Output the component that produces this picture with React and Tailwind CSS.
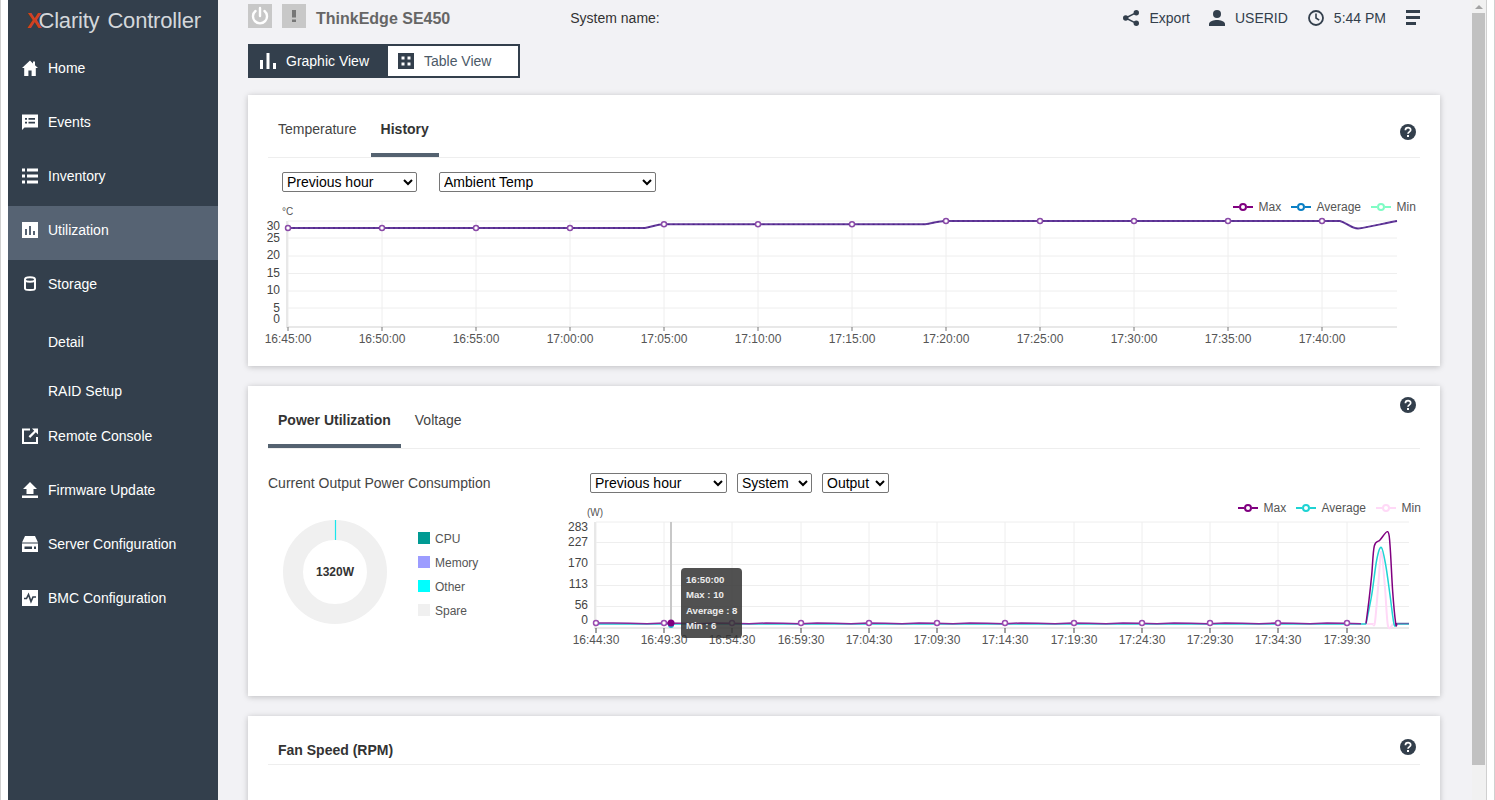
import React from "react";

const F = "Liberation Sans, Arial, sans-serif";

const NAV = [
  { label: "Home", icon: "home" },
  { label: "Events", icon: "events" },
  { label: "Inventory", icon: "inventory" },
  { label: "Utilization", icon: "utilization", active: true },
  { label: "Storage", icon: "storage" },
  { label: "Detail", sub: true },
  { label: "RAID Setup", sub: true },
  { label: "Remote Console", icon: "remote" },
  { label: "Firmware Update", icon: "firmware" },
  { label: "Server Configuration", icon: "server" },
  { label: "BMC Configuration", icon: "bmc" },
];

function NavIcon({ name }) {
  const p = { width: 16, height: 16, viewBox: "0 0 16 16", fill: "white", className: "shrink-0" };
  if (name === "home")
    return (
      <svg {...p}>
        <path d="M8 .5 0 8h2.200v8h4.200v-5.500h3.200V16h4.200V8H16L13 5.200V1.500h-2v1.900z" />
      </svg>
    );
  if (name === "events")
    return (
      <svg {...p}>
        <path fillRule="evenodd" d="M0 .5h16v13H2.500L0 16zM3 4v1.800h2V4zm3.500 0v1.800H13V4zM3 7.800v1.800h2V7.800zm3.500 0v1.800H13V7.800z" />
      </svg>
    );
  if (name === "inventory")
    return (
      <svg {...p}>
        <path d="M0 .5h3v3H0zM5 .5h11v3H5zM0 6.500h3v3H0zM5 6.500h11v3H5zM0 12.500h3v3H0zM5 12.500h11v3H5z" />
      </svg>
    );
  if (name === "utilization")
    return (
      <svg {...p}>
        <path fillRule="evenodd" d="M0 0h16v16H0zM3 7v6h2V7zm4-3v9h2V4zm4 5v4h2V9z" />
      </svg>
    );
  if (name === "storage")
    return (
      <svg {...p} fill="none" stroke="white" strokeWidth="2">
        <path d="M3 3.500v9c0 2 10 2 10 0v-9" />
        <ellipse cx="8" cy="3.500" rx="5" ry="2.200" />
      </svg>
    );
  if (name === "remote")
    return (
      <svg {...p}>
        <path d="M0 .5h8v2H2v11.500h12V9h2v7H0z" />
        <path d="M10 .5h6v6l-2.200-2.200-5.600 5.600-1.600-1.600 5.600-5.600z" />
      </svg>
    );
  if (name === "firmware")
    return (
      <svg {...p}>
        <path d="M8 0l7 7h-3.500v5h-7V7H1zM0 13.500h16V16H0z" />
      </svg>
    );
  if (name === "server")
    return (
      <svg {...p}>
        <path d="M3 0h10l3 6.500H0z" />
        <path fillRule="evenodd" d="M0 7.500h16V16H0zM2.500 10.500v2.500H10v-2.500zm9.500 0v2.500h2v-2.500z" />
      </svg>
    );
  return (
    <svg {...p}>
      <path d="M0 0h16v16H0z" />
      <path d="M2 8.500h2.500l2-4 2.500 7 2-4.500h3" fill="none" stroke="#333f4c" strokeWidth="1.600" />
    </svg>
  );
}

function Sidebar() {
  return (
    <div className="w-[210px] shrink-0 bg-[#333f4c] text-white">
      <div className="h-[44px] pl-[19px] pt-[8px] text-[22px] leading-[26px] text-[#d3d7db] whitespace-nowrap tracking-[-0.2px]">
        <span className="font-bold text-[#d2411f]">X</span>
        <span className="-ml-[3px]">Clarity</span>
        <span className="ml-[8px]">Controller</span>
      </div>
      {NAV.map((n) =>
        n.sub ? (
          <div key={n.label} className="h-[49px] pl-[40px] pt-[18px] text-sm leading-5">
            {n.label}
          </div>
        ) : (
          <div
            key={n.label}
            className={
              n.active
                ? "h-[54px] flex items-start gap-[10px] pl-[14px] pt-[14px] text-sm leading-5 bg-[#566373]"
                : "h-[54px] flex items-start gap-[10px] pl-[14px] pt-[14px] text-sm leading-5"
            }
          >
            <span className="mt-[2px]">
              <NavIcon name={n.icon} />
            </span>
            {n.label}
          </div>
        )
      )}
    </div>
  );
}

function HeaderBar() {
  return (
    <div className="flex items-start h-[44px] pt-[4px] pr-[20px] text-sm text-[#333f4c]">
      <div className="w-6 h-6 bg-[#c8c8c8] flex items-center justify-center">
        <svg width="20" height="20" viewBox="0 0 20 20" fill="none" stroke="white" strokeWidth="2.400" strokeLinecap="round">
          <path d="M10 2v8" />
          <path d="M5.500 5a7 7 0 1 0 9 0" />
        </svg>
      </div>
      <div className="ml-[10px] w-6 h-6 bg-[#c8c8c8] flex items-center justify-center">
        <svg width="6" height="14" viewBox="0 0 6 14" fill="#777">
          <path d="M1 1h4v7.500H1zM1 10.500h4V13H1z" />
        </svg>
      </div>
      <div className="ml-[10px] mt-[5px] text-base leading-5 font-bold text-[#666]">ThinkEdge SE450</div>
      <div className="ml-[120px] mt-[4px] leading-5 text-[#333]">System name:</div>
      <div className="ml-auto flex items-start">
        <svg className="mt-[6px]" width="16" height="16" viewBox="0 0 16 16" fill="#333f4c">
          <circle cx="13.300" cy="2.700" r="2.700" />
          <circle cx="2.700" cy="8" r="2.700" />
          <circle cx="13.300" cy="13.300" r="2.700" />
          <path d="M2.700 8l10.600-5.300M2.700 8l10.600 5.300" stroke="#333f4c" strokeWidth="1.400" />
        </svg>
        <span className="ml-[10px] mt-[4px] leading-5">Export</span>
        <svg className="ml-[19px] mt-[6px]" width="16" height="16" viewBox="0 0 16 16" fill="#333f4c">
          <circle cx="8" cy="4" r="4" />
          <path d="M0 16v-2c0-2.800 5-4 8-4s8 1.200 8 4v2z" />
        </svg>
        <span className="ml-[10px] mt-[4px] leading-5">USERID</span>
        <svg className="ml-[20px] mt-[6px]" width="16" height="16" viewBox="0 0 16 16" fill="none" stroke="#333f4c">
          <circle cx="8" cy="8" r="7" strokeWidth="1.800" />
          <path d="M8 3.500V8l3.200 2.200" strokeWidth="1.600" />
        </svg>
        <span className="ml-[10px] mt-[4px] leading-5">5:44 PM</span>
        <div className="ml-[20px] mt-[6px] w-[14px] flex flex-col gap-[3px]">
          <div className="h-[3px] bg-[#333f4c]" />
          <div className="h-[3px] bg-[#333f4c]" />
          <div className="h-[3px] w-[10px] bg-[#333f4c]" />
        </div>
      </div>
    </div>
  );
}

function ViewSwitch() {
  return (
    <div className="flex w-[272px] h-[34px] border-2 border-[#333f4c] text-sm bg-white">
      <div className="w-[138px] bg-[#333f4c] text-white flex items-center pl-[10px] gap-[10px]">
        <svg width="16" height="16" viewBox="0 0 16 16" fill="white">
          <path d="M0 7h3v9H0zM6.500 0h3v16h-3zM13 10h3v6h-3z" />
        </svg>
        Graphic View
      </div>
      <div className="flex-1 flex items-center pl-[10px] gap-[10px] text-[#4c5a68]">
        <svg width="16" height="16" viewBox="0 0 16 16" fill="#333f4c">
          <path fillRule="evenodd" d="M0 0h16v16H0zM3.500 3.500v3h3v-3zm6 0v3h3v-3zm-6 6v3h3v-3zm6 0v3h3v-3z" />
        </svg>
        Table View
      </div>
    </div>
  );
}

function Help({ className }) {
  return (
    <svg className={className} width="16" height="16" viewBox="0 0 16 16">
      <circle cx="8" cy="8" r="8" fill="#333f4c" />
      <path d="M5.400 6.200c0-3.300 5.300-3.300 5.300-.2 0 1.900-2.700 1.900-2.700 3.800" fill="none" stroke="white" strokeWidth="1.700" />
      <path d="M7 11h2v2H7z" fill="white" />
    </svg>
  );
}

function Tab({ active, children, className = "" }) {
  return (
    <div
      className={
        (active
          ? "h-[62px] px-[10px] pt-[24px] text-sm leading-5 font-bold text-[#333] border-b-4 border-[#546270] "
          : "h-[62px] px-[10px] pt-[24px] text-sm leading-5 text-[#444] ") + className
      }
    >
      {children}
    </div>
  );
}

function Sel({ className, options }) {
  return (
    <select className={"h-5 text-sm bg-white text-black border border-[#767676] rounded-[2px] " + className}>
      {options.map((o) => (
        <option key={o}>{o}</option>
      ))}
    </select>
  );
}

function LegendItem({ x, color, label }) {
  // x is the marker centre
  return (
    <g>
      <path d={`M${x - 10} 0h6M${x + 4} 0h6`} stroke={color} strokeWidth="2" />
      <circle cx={x} r="3" fill="white" stroke={color} strokeWidth="2" />
      <text x={x + 15.5} y="4" fontSize="12" fill="#555">
        {label}
      </text>
    </g>
  );
}

// catmull-rom through the points, for the curved parts of the lines
function smooth(pts) {
  let d = `M${pts[0][0]} ${pts[0][1]}`;
  for (let i = 0; i < pts.length - 1; i++) {
    const a = pts[i - 1] || pts[i];
    const b = pts[i];
    const c = pts[i + 1];
    const e = pts[i + 2] || c;
    const c1x = b[0] + (c[0] - a[0]) / 6;
    const c1y = b[1] + (c[1] - a[1]) / 6;
    const c2x = c[0] - (e[0] - b[0]) / 6;
    const c2y = c[1] - (e[1] - b[1]) / 6;
    d += `C${c1x} ${c1y} ${c2x} ${c2y} ${c[0]} ${c[1]}`;
  }
  return d;
}

// small wobble of the idle power reading
function idle(base, from, to) {
  const pts = [];
  for (let x = from, i = 0; x < to; x += 17, i++) {
    pts.push(`L${x} ${base + ((i * 7) % 3) * 0.35}`);
  }
  return pts.join("");
}

const T_X = [288, 382, 476, 570, 664, 758, 852, 946, 1040, 1134, 1228, 1322];
const T_LABELS = ["16:45:00", "16:50:00", "16:55:00", "17:00:00", "17:05:00", "17:10:00", "17:15:00", "17:20:00", "17:25:00", "17:30:00", "17:35:00", "17:40:00"];
const T_Y = [221, 238, 256, 273.5, 291, 308];
const T_TICKS = [[30, 230], [25, 242], [20, 259], [15, 277], [10, 294], [5, 312], [0, 323]];
const TEMP_LINE =
  "M288 228H645C652 227 656 224.300 664 224.300H925C932 223.500 938 221 946 221H1340C1347 223 1351 228.300 1358 228.500C1368 227.500 1385 223 1397 221";

function TempChart() {
  const yAt = (x) => (x < 664 ? 228 : x < 946 ? 224.3 : 221);
  return (
    <svg className="block mt-[6px] overflow-visible" width="1152" height="160" viewBox="268 198 1152 160" fontFamily={F}>
      <text x="282" y="215" fontSize="10" fill="#555">°C</text>
      {T_Y.map((y) => (
        <path key={y} d={`M288 ${y}H1397`} stroke="#eeeeee" />
      ))}
      {T_X.map((x) => (
        <path key={x} d={`M${x} 221V326`} stroke="#eeeeee" />
      ))}
      <path d="M287 221V327H1397" fill="none" stroke="#e8e8e8" strokeWidth="2" />
      {T_X.map((x, i) => (
        <g key={x}>
          <path d={`M${x} 327v4`} stroke="#777" />
          <text x={x} y="343" fontSize="12" fill="#555" textAnchor="middle">{T_LABELS[i]}</text>
        </g>
      ))}
      {T_TICKS.map(([v, y]) => (
        <text key={v} x="280" y={y} fontSize="12" fill="#444" textAnchor="end">{v}</text>
      ))}
      <path d={TEMP_LINE} fill="none" stroke="#663d9c" strokeWidth="2" />
      <path d={TEMP_LINE} fill="none" stroke="#4a1f86" strokeWidth="1" strokeDasharray="2 3" />
      {T_X.map((x) => (
        <circle key={x} cx={x} cy={yAt(x)} r="2.500" fill="white" stroke="#8a4aa8" strokeWidth="1.500" />
      ))}
      <g transform="translate(0 207)">
        <LegendItem x={1243} color="#800080" label="Max" />
        <LegendItem x={1301} color="#0a7fc4" label="Average" />
        <LegendItem x={1381} color="#7ffcc4" label="Min" />
      </g>
    </svg>
  );
}

const P_X = [596, 664, 732, 801, 869, 937, 1005, 1074, 1142, 1210, 1278, 1347];
const P_LABELS = ["16:44:30", "16:49:30", "16:54:30", "16:59:30", "17:04:30", "17:09:30", "17:14:30", "17:19:30", "17:24:30", "17:29:30", "17:34:30", "17:39:30"];
const P_Y = [522, 542.5, 564.5, 585.5, 606.5];
const P_TICKS = [[283, 531], [227, 546], [170, 567], [113, 588], [56, 609], [0, 624]];

const MAX_SPIKE = smooth([[1366, 623.5], [1369, 600], [1371.7, 575], [1374.3, 546], [1380, 540], [1387.7, 531.7], [1390, 545], [1392.7, 591.7], [1395.7, 623.5], [1397, 623.5]]);
const AVG_SPIKE = smooth([[1366, 624], [1371.7, 595], [1376.7, 560], [1381.3, 547.3], [1385.7, 565], [1390, 595], [1394, 624], [1397, 624]]);
const MIN_SPIKE = smooth([[1373, 624], [1375, 622], [1378.3, 585], [1381.3, 551.7], [1385, 588], [1388, 626], [1393, 624]]);

function PowerChart() {
  return (
    <svg className="block mt-[4px] overflow-visible" width="860" height="160" viewBox="560 497 860 160" fontFamily={F}>
      <text x="587" y="516" fontSize="10" fill="#555">(W)</text>
      {P_Y.map((y) => (
        <path key={y} d={`M596 ${y}H1409`} stroke="#eeeeee" />
      ))}
      {P_X.map((x) => (
        <path key={x} d={`M${x} 522V627`} stroke="#eeeeee" />
      ))}
      <path d="M595 522V628H1409" fill="none" stroke="#e8e8e8" strokeWidth="2" />
      {P_X.map((x, i) => (
        <g key={x}>
          <path d={`M${x} 628v5`} stroke="#444" />
          <text x={x} y="644" fontSize="12" fill="#555" textAnchor="middle">{P_LABELS[i]}</text>
        </g>
      ))}
      {P_TICKS.map(([v, y]) => (
        <text key={v} x="588" y={y} fontSize="12" fill="#444" textAnchor="end">{v}</text>
      ))}
      <path d="M671 522V628" stroke="#c8c8c8" strokeWidth="2" />
      <g fill="none">
        <path d="M596 624H1373" stroke="#ffd9f7" strokeWidth="2" />
        <path d={MIN_SPIKE} stroke="#ffd9f7" strokeWidth="2" />
        <path d="M1393 624H1409" stroke="#ffd9f7" strokeWidth="2" />
        <path d="M596 624H1366" stroke="#1fd3d3" strokeWidth="1.500" />
        <path d={AVG_SPIKE} stroke="#1fd3d3" strokeWidth="1.500" />
        <path d="M1397 624H1409" stroke="#1fd3d3" strokeWidth="1.500" />
        <path d={"M596 623" + idle(623, 613, 1366)} stroke="#8a2a9a" strokeWidth="1.500" />
        <path d={MAX_SPIKE} stroke="#800080" strokeWidth="1.500" />
        <path d="M1397 623.500H1409" stroke="#5a6aa8" strokeWidth="1.500" />
      </g>
      {P_X.map((x) => (
        <circle key={x} cx={x} cy={623} r="2.500" fill="white" stroke="#9a4ab0" strokeWidth="1.500" />
      ))}
      <circle cx="671" cy="625" r="3" fill="#1fb5d3" />
      <circle cx="671" cy="623" r="3.500" fill="#800080" />
      <g transform="translate(0 508)">
        <LegendItem x={1248} color="#800080" label="Max" />
        <LegendItem x={1306} color="#1fd3d3" label="Average" />
        <LegendItem x={1386} color="#ffd9f7" label="Min" />
      </g>
    </svg>
  );
}

function Donut() {
  return (
    <svg className="shrink-0" width="104" height="104" viewBox="0 0 104 104">
      <circle cx="52" cy="52" r="42" fill="none" stroke="#f0f0f0" strokeWidth="20" />
      <path d="M52.500 0v20" stroke="#19e6ec" strokeWidth="1.200" />
      <text x="52" y="56" fontSize="12" fontWeight="bold" fill="#333" textAnchor="middle" fontFamily={F}>
        1320W
      </text>
    </svg>
  );
}

const DONUT_LEGEND = [
  { label: "CPU", swatch: "bg-[#009a93]" },
  { label: "Memory", swatch: "bg-[#9c9cff]" },
  { label: "Other", swatch: "bg-[#00ffff]" },
  { label: "Spare", swatch: "bg-[#f0f0f0]" },
];

function Card({ className, children }) {
  return <div className={"bg-white shadow-[0_1px_6px_rgba(0,0,0,0.22)] px-5 " + className}>{children}</div>;
}

export default function App() {
  return (
    <div className="flex h-screen overflow-hidden bg-white" style={{ fontFamily: F }}>
      <div className="w-2 shrink-0 border-l border-[#d0d0d0]" />
      <Sidebar />
      <main className="flex-1 min-w-0 overflow-hidden bg-[#f2f2f5] pl-[30px] pr-[32px]">
        <HeaderBar />
        <ViewSwitch />

        <Card className="mt-[17px] h-[271px]">
          <div className="flex justify-between border-b border-[#eeeeee] h-[63px]">
            <div className="flex gap-[4px]">
              <Tab>Temperature</Tab>
              <Tab active>History</Tab>
            </div>
            <Help className="mt-[29px] mr-[4px]" />
          </div>
          <div className="flex gap-[22px] pl-[14px] pt-[14px]">
            <Sel className="w-[135px]" options={["Previous hour"]} />
            <Sel className="w-[217px]" options={["Ambient Temp"]} />
          </div>
          <TempChart />
        </Card>

        <Card className="mt-[20px] h-[310px]">
          <div className="flex justify-between border-b border-[#eeeeee] h-[63px]">
            <div className="flex gap-[4px]">
              <Tab active>Power Utilization</Tab>
              <Tab>Voltage</Tab>
            </div>
            <Help className="mt-[11px] mr-[4px]" />
          </div>
          <div className="flex pt-[24px]">
            <div className="w-[292px] shrink-0">
              <div className="text-sm leading-5 text-[#444]">Current Output Power Consumption</div>
              <div className="flex mt-[27px] ml-[15px]">
                <Donut />
                <div className="ml-[31px] mt-[12px] flex flex-col gap-[12px]">
                  {DONUT_LEGEND.map((d) => (
                    <div key={d.label} className="flex items-center gap-[5px] h-3 text-xs text-[#555]">
                      <span className={"w-3 h-3 " + d.swatch} />
                      <span className="mt-px">{d.label}</span>
                    </div>
                  ))}
                </div>
              </div>
            </div>
            <div className="relative w-[860px]">
              <div className="flex gap-[10px] pl-[30px]">
                <Sel className="w-[137px]" options={["Previous hour"]} />
                <Sel className="w-[75px]" options={["System"]} />
                <Sel className="w-[67px]" options={["Output"]} />
              </div>
              <PowerChart />
              <div className="absolute left-[121px] top-[95px] w-[61px] h-[70px] rounded-[4px] bg-[#333]/85 pl-[5px] pt-[4px] text-[9.6px] leading-[15.300px] font-bold text-white/90 whitespace-nowrap">
                <div>16:50:00</div>
                <div>Max : 10</div>
                <div>Average : 8</div>
                <div>Min : 6</div>
              </div>
            </div>
          </div>
        </Card>

        <Card className="mt-[20px] h-[200px]">
          <div className="flex justify-between border-b border-[#eeeeee] h-[49px]">
            <div className="pl-[10px] pt-[24px] text-sm leading-5 font-bold text-[#333]">Fan Speed (RPM)</div>
            <Help className="mt-[23px] mr-[4px]" />
          </div>
        </Card>
      </main>
      <div className="w-[15px] shrink-0 bg-[#f1f1f1] border-r border-[#d0d0d0]">
        <div className="h-[13px] flex items-center justify-center">
          <div className="w-0 h-0 border-x-[4px] border-x-transparent border-b-[4px] border-b-[#a3a3a3]" />
        </div>
        <div className="h-[752px] w-[13px] bg-[#c1c1c1]" />
      </div>
      <div className="w-2 shrink-0 bg-white border-r border-[#d0d0d0]" />
    </div>
  );
}
